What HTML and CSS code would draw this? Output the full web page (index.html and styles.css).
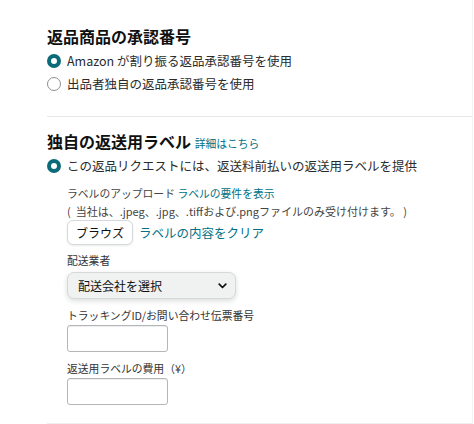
FILE: index.html
```html
<!DOCTYPE html>
<html lang="ja">

<head>
    <meta charset="UTF-8">
    <meta name="viewport" content="width=device-width, initial-scale=1.0">
    <title>返品設定</title>
    <link rel="stylesheet" href="styles.css">
</head>

<body>

    <div class="panel">
        <!-- 承認番号 -->
        <section class="section section-first">
            <h2>返品商品の承認番号</h2>
            <div class="radio-row">
                <span class="radio checked"></span>
                <span>Amazon が割り振る返品承認番号を使用</span>
            </div>
            <div class="radio-row">
                <span class="radio"></span>
                <span>出品者独自の返品承認番号を使用</span>
            </div>
        </section>

        <!-- 返送用ラベル -->
        <section class="section section-label">
            <h2>独自の返送用ラベル <a class="link small" href="#">詳細はこちら</a></h2>
            <div class="radio-row">
                <span class="radio checked"></span>
                <span>この返品リクエストには、返送料前払いの返送用ラベルを提供</span>
            </div>

            <div class="sub">
                <div class="upload-info">
                    <p>ラベルのアップロード <a class="link" href="#">ラベルの要件を表示</a></p>
                    <p class="formats">(&nbsp;&nbsp;当社は、.jpeg、.jpg、.tiffおよび.pngファイルのみ受け付けます。&nbsp;)</p>
                </div>
                <div class="upload-row">
                    <button class="btn">ブラウズ</button>
                    <a class="link clear" href="#">ラベルの内容をクリア</a>
                </div>

                <label class="field-label">配送業者</label>
                <div class="select">
                    <span>配送会社を選択</span>
                    <svg width="9" height="6" viewBox="0 0 9 6">
                        <path d="M1.2 1.2 L4.5 4.5 L7.8 1.2" fill="none" stroke="#0f1111" stroke-width="1.7" stroke-linecap="round" stroke-linejoin="round" />
                    </svg>
                </div>

                <label class="field-label">トラッキングID/お問い合わせ伝票番号</label>
                <input type="text" class="text-input">

                <label class="field-label">返送用ラベルの費用（¥）</label>
                <input type="text" class="text-input">
            </div>
        </section>
    </div>

</body>

</html>
```

FILE: styles.css
```css
body {
    margin: 0;
    font-family: "Noto Sans CJK JP", "Noto Sans", sans-serif;
    color: #0f1111;
    background-color: #ffffff;
}

.panel {
    margin-left: 47px;
    width: 425px;
    border-right: 1px solid #f3f3f3;
    border-bottom: 1px solid #eeeeee;
}

.section-first {
    padding-top: 26px;
    padding-bottom: 21px;
    border-bottom: 1px solid #e7e7e7;
}

.section-label {
    padding-top: 14px;
    padding-bottom: 18px;
}

h2 {
    font-size: 16px;
    line-height: 20px;
    font-weight: 700;
    margin: 0 0 3px 0;
}

.section-label h2 {
    margin-bottom: 1px;
}

.link {
    color: #007185;
    text-decoration: none;
}

.small {
    font-size: 10.8px;
    font-weight: 400;
}

.radio-row {
    display: flex;
    align-items: center;
    gap: 6px;
    height: 23px;
    font-size: 12.5px;
    color: #2b2b2b;
}

.radio {
    width: 14px;
    height: 14px;
    border-radius: 50%;
    border: 1px solid #8d9090;
    box-sizing: border-box;
    background: #ffffff;
    flex-shrink: 0;
}

.radio.checked {
    border: 4.5px solid #0b6b7a;
}

.sub {
    padding-left: 20px;
    display: flex;
    flex-direction: column;
    align-items: flex-start;
}

.upload-info {
    margin-top: 7px;
    font-size: 10.8px;
    color: #444;
}

.upload-info p {
    margin: 0;
    line-height: 18px;
}

.upload-info .formats {
    font-size: 11px;
}

.upload-row {
    display: flex;
    align-items: center;
    gap: 6px;
}

.btn {
    height: 25px;
    padding: 0 8px;
    font-family: inherit;
    font-size: 12px;
    color: #0f1111;
    background: #ffffff;
    border: 1px solid #d5d9d9;
    border-radius: 6px;
    box-shadow: 0 1px 2px rgba(213, 217, 217, 0.5);
}

.clear {
    font-size: 12.5px;
}

.field-label {
    font-size: 10.8px;
    line-height: 16px;
    color: #333;
    margin-top: 7px;
}

.select {
    margin-top: 4px;
    width: 169px;
    height: 27px;
    box-sizing: border-box;
    display: flex;
    align-items: center;
    justify-content: space-between;
    padding: 0 8px 0 10px;
    font-size: 12px;
    background: #f0f2f2;
    border: 1px solid #d5d9d9;
    border-radius: 7px;
    box-shadow: 0 2px 5px rgba(15, 17, 17, 0.15);
}

.select + .field-label {
    margin-top: 8px;
}

.text-input {
    margin-top: 2px;
    width: 101px;
    height: 27px;
    box-sizing: border-box;
    border: 1px solid #b3b6b9;
    border-radius: 3px;
    box-shadow: 0 1px 0 rgba(255, 255, 255, 0.5), 0 1px 0 rgba(15, 17, 17, 0.07) inset;
}

.text-input + .field-label {
    margin-top: 8px;
}
```
